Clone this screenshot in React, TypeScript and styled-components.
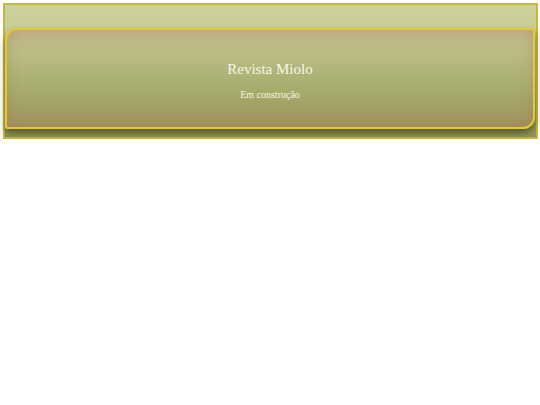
import React from "react";
import styled, { createGlobalStyle } from "styled-components";

const Global = createGlobalStyle`
  body {
    margin: 0;
    background: #ffffff;
    font-family: "Liberation Serif", "DejaVu Serif", serif;
  }
`;

const Page = styled.div`
  padding: 3px 2px 0 3px;
`;

const Header = styled.header`
  border: 2px solid #c6b83c;
  background: linear-gradient(to bottom, #cdd19c 0%, #c4c88e 40%, #9fa566 85%, #8c9352 100%);
  padding: 23px 1px 8px 0;
`;

const Panel = styled.div`
  height: 97px;
  border: 2px solid #e6c930;
  border-radius: 12px 3px 12px 3px;
  background: linear-gradient(to bottom, #c2b78a 0%, #b9bc84 25%, #a6ac6c 62%, #a1925f 100%);
  box-shadow: inset 0 0 14px rgba(170, 110, 90, 0.35), 0 4px 6px rgba(40, 40, 10, 0.55);
  display: flex;
  flex-direction: column;
  align-items: center;
  color: #f8f5e6;
`;

const Title = styled.h1`
  margin: 30px 0 0;
  font-size: 15px;
  font-weight: normal;
  line-height: 18px;
`;

const Subtitle = styled.p`
  margin: 11px 0 0;
  font-size: 10px;
  line-height: 12px;
`;

export default function App() {
  return (
    <Page>
      <Global />
      <Header>
        <Panel>
          <Title>Revista Miolo</Title>
          <Subtitle>Em construção</Subtitle>
        </Panel>
      </Header>
    </Page>
  );
}
